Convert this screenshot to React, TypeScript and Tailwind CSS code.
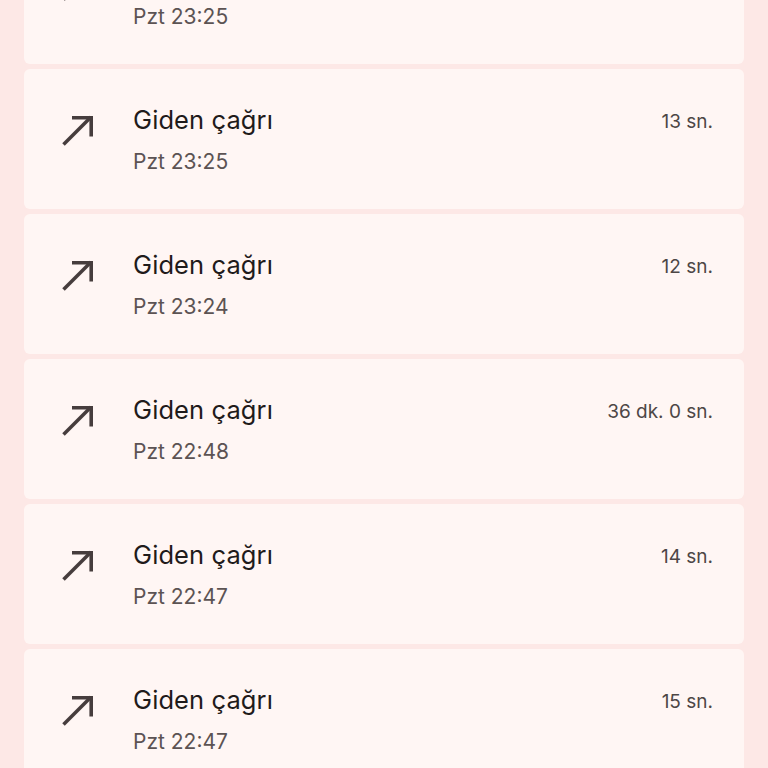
type CallItem = {
  time: string;
  duration: string;
};

const calls: CallItem[] = [
  { time: "Pzt 23:25", duration: "13 sn." },
  { time: "Pzt 23:25", duration: "13 sn." },
  { time: "Pzt 23:24", duration: "12 sn." },
  { time: "Pzt 22:48", duration: "36 dk. 0 sn." },
  { time: "Pzt 22:47", duration: "14 sn." },
  { time: "Pzt 22:47", duration: "15 sn." },
];

function OutgoingIcon() {
  return (
    <svg width="32" height="32" viewBox="0 0 32 32" fill="none" className="shrink-0">
      <path d="M2.5 30.5 L30 3" stroke="#463d3d" strokeWidth="3.6" />
      <path d="M11 3.8 H30.2 V22.5" stroke="#463d3d" strokeWidth="3.6" />
    </svg>
  );
}

function CallRow({ item }: { item: CallItem }) {
  return (
    <div className="flex h-[140px] shrink-0 items-start rounded-md bg-[#fff6f4] pl-[37px] pr-[31px] pt-[35px]">
      <div className="mt-[10px] w-[72px]">
        <OutgoingIcon />
      </div>
      <div className="flex flex-1 flex-col">
        <div className="text-[25.5px] leading-[32px] tracking-[0.1px] text-[#1f1b1b]">Giden çağrı</div>
        <div className="mt-[12px] text-[21px] leading-[28px] text-[#5c5353]">{item.time}</div>
      </div>
      <div className="mt-[4px] text-[19px] leading-[28px] text-[#4d4646]">{item.duration}</div>
    </div>
  );
}

export default function App() {
  return (
    <div
      className="h-screen overflow-hidden bg-[#fde8e6] px-6"
      style={{ fontFamily: "Inter, 'Noto Sans', sans-serif" }}
    >
      <div className="mt-[-76px] flex flex-col gap-[5px]">
        {calls.map((c, i) => (
          <CallRow key={i} item={c} />
        ))}
      </div>
    </div>
  );
}
